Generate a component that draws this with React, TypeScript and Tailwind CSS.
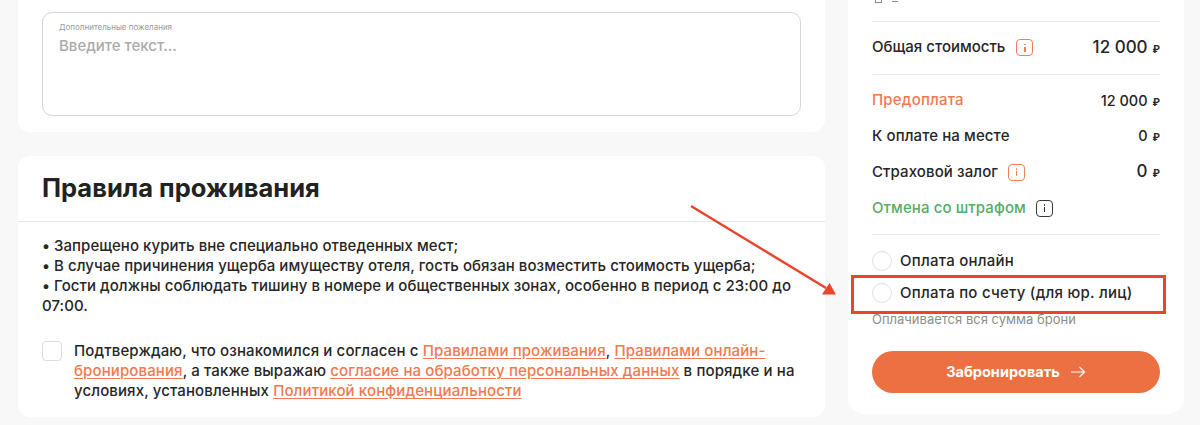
const font = { fontFamily: '"Inter", "Noto Sans", sans-serif' };

function InfoIcon({ dark = false }: { dark?: boolean }) {
  return (
    <span
      className={`flex h-[17px] w-[17px] shrink-0 flex-col items-center justify-center gap-[1.5px] rounded-[4px] border-[1.5px] ${
        dark ? 'border-[#3a3a3a]' : 'border-[#ef7f57]'
      }`}
    >
      <span className={`h-[1.5px] w-[1.5px] rounded-full ${dark ? 'bg-[#2b2b2b]' : 'bg-[#ef7f57]'}`} />
      <span className={`h-[5px] w-[1.5px] ${dark ? 'bg-[#2b2b2b]' : 'bg-[#ef7f57]'}`} />
    </span>
  );
}

function Price({ value, big = false }: { value: string; big?: boolean }) {
  return (
    <span className="flex items-baseline gap-[5px]">
      <span className={big ? 'text-[17px] font-medium' : 'text-[14.5px] font-medium'}>{value}</span>
      <span className="text-[10px] font-bold">₽</span>
    </span>
  );
}

function Radio({ label }: { label: string }) {
  return (
    <div className="flex h-[20px] items-center gap-[8px]">
      <span className="h-[20px] w-[20px] rounded-full border border-[#dedede] bg-white" />
      <span className="text-[15px] font-medium tracking-[0.25px] text-[#262626]">{label}</span>
    </div>
  );
}

function Rule() {
  return <div className="h-px bg-[#e9e9e9]" />;
}

const link = 'text-[#f0794f] underline underline-offset-2';

export default function App() {
  return (
    <div style={font} className="relative h-[425px] w-[1200px] overflow-hidden bg-[#f8f8f8] text-[#262626]">
      <div className="flex items-start gap-[23px] pl-[18px]">
        {/* left column */}
        <div className="flex w-[807px] flex-col gap-[24px]">
          <section className="rounded-b-[12px] bg-white px-[24px] pt-[12px] pb-[16px]">
            <div className="h-[104px] rounded-[10px] border border-[#d6d6d6] px-[16px] pt-[9px]">
              <p className="text-[8px] leading-[10px] text-[#9a9a9a]">Дополнительные пожелания</p>
              <p className="mt-[4px] text-[15px] leading-[20px] font-medium text-[#ababab]">Введите текст...</p>
            </div>
          </section>

          <section className="h-[261px] rounded-[12px] bg-white">
            <h2 className="flex h-[66px] items-center border-b border-[#e4e4e4] px-[24px] text-[25.5px] font-bold text-[#222]">
              Правила проживания
            </h2>
            <div className="px-[24px] pt-[14px] text-[15px] leading-[20px] font-medium tracking-[0.05px]">
              <p>• Запрещено курить вне специально отведенных мест;</p>
              <p>• В случае причинения ущерба имуществу отеля, гость обязан возместить стоимость ущерба;</p>
              <p>• Гости должны соблюдать тишину в номере и общественных зонах, особенно в период с 23:00 до 07:00.</p>
              <div className="mt-[25px] flex gap-[12px]">
                <span className="h-[20px] w-[20px] shrink-0 rounded-[4px] border border-[#dcdcdc] bg-white" />
                <p className="tracking-[0.12px]">
                  Подтверждаю, что ознакомился и согласен с <a className={link}>Правилами проживания</a>,{' '}
                  <a className={link}>Правилами онлайн-бронирования</a>, а также выражаю{' '}
                  <a className={link}>согласие на обработку персональных данных</a> в порядке и на условиях,
                  установленных <a className={link}>Политикой конфиденциальности</a>
                </p>
              </div>
            </div>
          </section>
        </div>

        {/* right column */}
        <aside className="h-[414px] w-[336px] rounded-b-[16px] bg-white px-[24px]">
          <div className="flex h-[21px] items-start gap-[10px] pl-[3px]">
            <span className="h-[3px] w-[7px] border-x border-b border-[#8a8a8a]" />
            <span className="mt-[1px] h-px w-[6px] bg-[#8a8a8a]" />
          </div>
          <Rule />
          <div className="flex h-[52px] items-center justify-between pb-[1px] text-[15px]">
            <span className="flex items-center gap-[11px] font-medium">
              Общая стоимость <InfoIcon />
            </span>
            <Price value="12 000" big />
          </div>
          <Rule />
          <div className="flex h-[52px] items-center justify-between pb-[1px]">
            <span className="text-[15px] font-medium tracking-[0.2px] text-[#f0794f]">Предоплата</span>
            <Price value="12 000" />
          </div>
          <div className="-mt-[9px] flex h-[36px] items-center justify-between">
            <span className="text-[15px] font-medium tracking-[0.1px]">К оплате на месте</span>
            <Price value="0" />
          </div>
          <div className="flex h-[36px] items-center justify-between">
            <span className="flex items-center gap-[10px] text-[15px] font-medium tracking-[0.1px]">
              Страховой залог <InfoIcon />
            </span>
            <Price value="0" big />
          </div>
          <div className="flex h-[36px] items-center gap-[10px] text-[15px] font-medium tracking-[0.1px] text-[#55ab68]">
            Отмена со штрафом <InfoIcon dark />
          </div>
          <div className="mt-[8px]">
            <Rule />
          </div>
          <div className="mt-[16px] flex flex-col gap-[12px]">
            <Radio label="Оплата онлайн" />
            <Radio label="Оплата по счету (для юр. лиц)" />
          </div>
          <p className="mt-[7px] text-[13px] leading-[18px] text-[#8e8e8e]">Оплачивается вся сумма брони</p>
          <button className="mt-[23px] flex h-[42px] w-full items-center justify-center gap-[10px] rounded-full bg-[#ec7042] text-[14.5px] font-bold text-white">
            Забронировать
            <svg width="16" height="12" viewBox="0 0 16 12" fill="none" stroke="currentColor" strokeWidth="1.2">
              <path d="M1 6h13.5M9.5 1l5 5-5 5" />
            </svg>
          </button>
        </aside>
      </div>

      {/* annotation drawn over the page */}
      <div className="absolute top-[275px] left-[851px] h-[39px] w-[315px] border-[3px] border-[#e8452c]" />
      <svg className="absolute top-0 left-0" width="1200" height="425" fill="none">
        <path d="M691 206L826 288" stroke="#e8452c" strokeWidth="2.5" />
        <path d="M836 294.5L822 294.5L829.5 283Z" fill="#e8452c" />
      </svg>
    </div>
  );
}
